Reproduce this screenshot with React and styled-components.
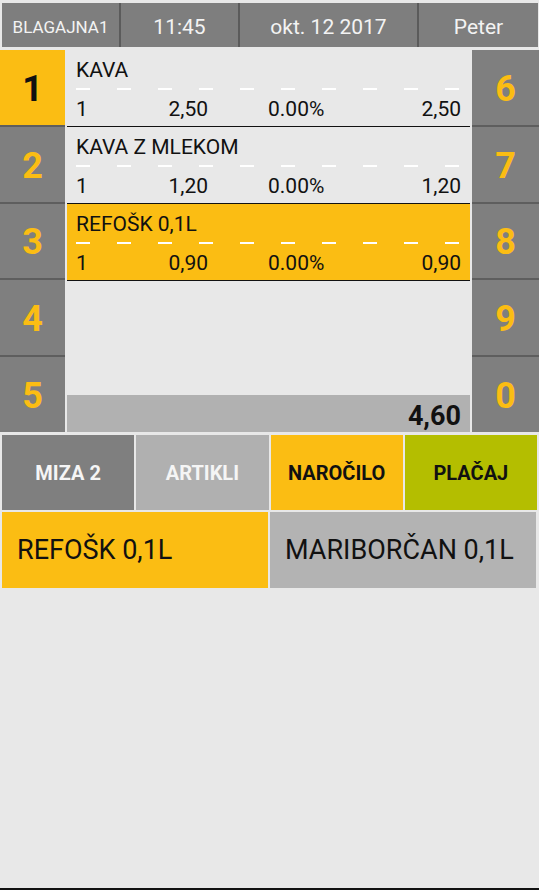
import React from 'react'
import styled, { createGlobalStyle } from 'styled-components'

const GlobalStyle = createGlobalStyle`
  html, body {
    margin: 0;
    padding: 0;
    background: #e8e8e8;
  }
  * {
    box-sizing: border-box;
  }
`;

const YELLOW = '#fbbd13';

const Page = styled.div`
    min-height: 100vh;
    background: #e8e8e8;
    border-bottom: 2px solid #111;
    font-family: Roboto, "Liberation Sans", sans-serif;
    display: flex;
    flex-direction: column;
`;

const TopBar = styled.div`
    display: grid;
    grid-template-columns: 117px 117px 1fr 119px;
    gap: 2px;
    height: 44px;
    margin: 3px 1px 0 2px;
    background: #5b5b5b;
`;

const TopCell = styled.div`
    background: #7e7e7e;
    color: #f3f3f3;
    font-size: ${({ small }) => (small ? '17px' : '21px')};
    padding-top: 3px;
    display: flex;
    align-items: center;
    justify-content: center;
`;

const Main = styled.div`
    display: flex;
    gap: 2px;
    height: 382px;
    margin-top: 3px;
`;

const KeyColumn = styled.div`
    width: ${({ wide }) => (wide ? '67px' : '65px')};
    display: flex;
    flex-direction: column;
    background: #7f7f7f;
`;

const Key = styled.div`
    flex: 1;
    display: flex;
    align-items: center;
    justify-content: center;
    padding-top: 3px;
    font-size: 36px;
    font-weight: 700;
    color: ${({ active }) => (active ? '#111' : YELLOW)};
    background: ${({ active }) => (active ? YELLOW : '#7f7f7f')};
    border-bottom: 2px solid #5e5e5e;

    &:last-child {
        border-bottom: none;
    }
`;

const List = styled.div`
    flex: 1;
    display: flex;
    flex-direction: column;
`;

const Item = styled.div`
    height: 77px;
    padding: 0 9px;
    background: ${({ selected }) => (selected ? YELLOW : 'transparent')};
    border-bottom: 1px solid #111;
    color: #111;
    font-size: 21px;
    display: flex;
    flex-direction: column;
`;

const ItemName = styled.div`
    height: 38px;
    padding-top: 7px;
    line-height: 26px;
`;

const Dashes = styled.div`
    height: 2px;
    background: repeating-linear-gradient(
        to right,
        #ffffff 0,
        #ffffff 14px,
        transparent 14px,
        transparent 41px
    );
`;

const ItemRow = styled.div`
    display: grid;
    grid-template-columns: 60px 72px 1fr auto;
    align-items: center;
    height: 36px;
    padding-top: 2px;
`;

const Price = styled.span`
    text-align: right;
`;

const Discount = styled.span`
    padding-left: 60px;
`;

const Spacer = styled.div`
    flex: 1;
`;

const Total = styled.div`
    height: 37px;
    background: #b1b1b1;
    display: flex;
    align-items: center;
    justify-content: flex-end;
    padding: 4px 9px 0 0;
    font-size: 27px;
    font-weight: 700;
    color: #111;
`;

const ButtonRow = styled.div`
    display: grid;
    grid-template-columns: repeat(4, 1fr);
    gap: 2px;
    height: 75px;
    margin-top: 3px;
    padding: 0 2px;
`;

const ActionButton = styled.div`
    background: ${({ bg }) => bg};
    color: ${({ fg }) => fg};
    font-size: 20px;
    font-weight: 700;
    display: flex;
    align-items: center;
    justify-content: center;
`;

const QuickRow = styled.div`
    display: grid;
    grid-template-columns: 1fr 1fr;
    gap: 2px;
    height: 76px;
    margin-top: 2px;
    padding: 0 3px 0 2px;
`;

const QuickItem = styled.div`
    background: ${({ bg }) => bg};
    color: #111;
    font-size: 27px;
    display: flex;
    align-items: center;
    padding-left: 15px;
`;

const items = [
    { name: 'KAVA', qty: '1', price: '2,50', discount: '0.00%', total: '2,50' },
    { name: 'KAVA Z MLEKOM', qty: '1', price: '1,20', discount: '0.00%', total: '1,20' },
    { name: 'REFOŠK 0,1L', qty: '1', price: '0,90', discount: '0.00%', total: '0,90', selected: true },
];

const buttons = [
    { label: 'MIZA 2', bg: '#7f7f7f', fg: '#f5f5f5' },
    { label: 'ARTIKLI', bg: '#b0b0b0', fg: '#f5f5f5' },
    { label: 'NAROČILO', bg: YELLOW, fg: '#111' },
    { label: 'PLAČAJ', bg: '#b4be00', fg: '#111' },
];

const App = () => {
  return <>
    <GlobalStyle />
    <Page>
        <TopBar>
            <TopCell small>BLAGAJNA1</TopCell>
            <TopCell>11:45</TopCell>
            <TopCell>okt. 12 2017</TopCell>
            <TopCell>Peter</TopCell>
        </TopBar>
        <Main>
            <KeyColumn>
                {['1', '2', '3', '4', '5'].map((n) => (
                    <Key key={n} active={n === '1'}>{n}</Key>
                ))}
            </KeyColumn>
            <List>
                {items.map((item, index) => (
                    <Item key={index} selected={item.selected}>
                        <ItemName>{item.name}</ItemName>
                        <Dashes />
                        <ItemRow>
                            <span>{item.qty}</span>
                            <Price>{item.price}</Price>
                            <Discount>{item.discount}</Discount>
                            <span>{item.total}</span>
                        </ItemRow>
                    </Item>
                ))}
                <Spacer />
                <Total>4,60</Total>
            </List>
            <KeyColumn wide>
                {['6', '7', '8', '9', '0'].map((n) => (
                    <Key key={n}>{n}</Key>
                ))}
            </KeyColumn>
        </Main>
        <ButtonRow>
            {buttons.map((b) => (
                <ActionButton key={b.label} bg={b.bg} fg={b.fg}>{b.label}</ActionButton>
            ))}
        </ButtonRow>
        <QuickRow>
            <QuickItem bg={YELLOW}>REFOŠK 0,1L</QuickItem>
            <QuickItem bg="#b3b3b3">MARIBORČAN 0,1L</QuickItem>
        </QuickRow>
    </Page>
  </>
}

export default App
